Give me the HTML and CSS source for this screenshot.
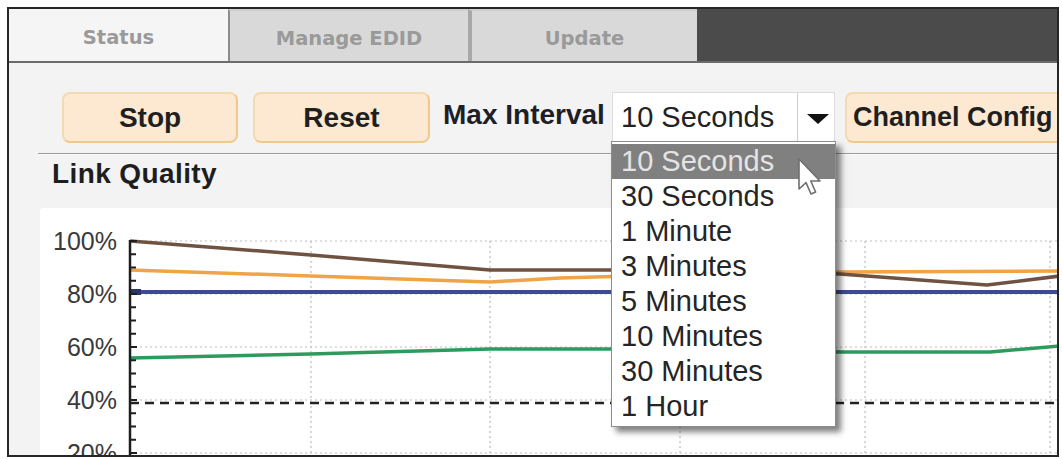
FILE: index.html
```html
<!DOCTYPE html>
<html>
<head>
<meta charset="utf-8">
<link rel="stylesheet" href="styles.css">
</head>
<body>
<div class="frame">
  <div class="tabs">
    <div class="tab active">Status</div>
    <div class="tab inactive">Manage EDID</div>
    <div class="tab inactive last">Update</div>
  </div>
  <div class="content">
    <div class="toolbar">
      <button class="btn btn-stop">Stop</button>
      <button class="btn btn-reset">Reset</button>
      <span class="label">Max Interval</span>
      <div class="select">
        <span class="select-value">10 Seconds</span>
        <span class="select-arrow"><svg width="22" height="10" viewBox="0 0 22 10"><polygon points="0,0 22,0 11,10" fill="#111"/></svg></span>
        <ul class="dropdown">
          <li class="selected">10 Seconds</li>
          <li>30 Seconds</li>
          <li>1 Minute</li>
          <li>3 Minutes</li>
          <li>5 Minutes</li>
          <li>10 Minutes</li>
          <li>30 Minutes</li>
          <li>1 Hour</li>
        </ul>
        <svg class="cursor" width="26" height="40" viewBox="0 0 13 20"><path d="M1 1 L1 16 L4.5 12.8 L7 18.5 L9.3 17.5 L6.9 12 L11.5 12 Z" fill="#fff" stroke="#6f6f6f" stroke-width="0.8" stroke-linejoin="round"/></svg>
      </div>
      <button class="btn btn-channel">Channel Config</button>
    </div>
    <div class="sep"></div>
    <div class="section-title">Link Quality</div>
    <div class="chart">
      <svg width="1017" height="250" viewBox="0 0 1017 250">
        <g stroke="#bdbdbd" stroke-width="1.2" stroke-dasharray="2 3" fill="none">
          <line x1="90" y1="33" x2="1017" y2="33"/>
          <line x1="90" y1="86" x2="1017" y2="86"/>
          <line x1="90" y1="139" x2="1017" y2="139"/>
          <line x1="90" y1="192" x2="1017" y2="192"/>
          <line x1="90" y1="245" x2="1017" y2="245"/>
          <line x1="271" y1="33" x2="271" y2="250"/>
          <line x1="450" y1="33" x2="450" y2="250"/>
          <line x1="640" y1="33" x2="640" y2="250"/>
          <line x1="825" y1="33" x2="825" y2="250"/>
          <line x1="1010" y1="33" x2="1010" y2="250"/>
        </g>
        <g class="ylabels" fill="#3a3a3a" text-anchor="end">
          <text x="77" y="42">100%</text>
          <text x="77" y="95">80%</text>
          <text x="77" y="148">60%</text>
          <text x="77" y="201">40%</text>
          <text x="77" y="254">20%</text>
        </g>
        <line x1="90" y1="195" x2="1017" y2="195" stroke="#222" stroke-width="2.5" stroke-dasharray="9 6"/>
        <polyline points="90,150 270,146 450,141 660,141 800,144 950,144 1020,138" fill="none" stroke="#2f9a5d" stroke-width="3.5" stroke-linejoin="round"/>
        <line x1="90" y1="84" x2="1017" y2="84" stroke="#3c4b94" stroke-width="4"/>
        <line x1="90" y1="84" x2="101" y2="84" stroke="#2b3670" stroke-width="6"/>
        <polyline points="90,62 271,68 450,74 520,70 660,66 800,64 1020,63" fill="none" stroke="#f0a347" stroke-width="3.5" stroke-linejoin="round"/>
        <polyline points="90,33 271,47 450,62 660,62 800,66 947,77 1020,68" fill="none" stroke="#6f5242" stroke-width="3.5" stroke-linejoin="round"/>
        <line x1="90" y1="32" x2="90" y2="250" stroke="#1e1e1e" stroke-width="2.5"/>
        <path d="M90 33h7M90 46.25h6M90 59.5h6M90 72.75h6M90 86h7M90 99.25h6M90 112.5h6M90 125.75h6M90 139h7M90 152.25h6M90 165.5h6M90 178.75h6M90 192h7M90 205.25h6M90 218.5h6M90 231.75h6M90 245h7" stroke="#1e1e1e" stroke-width="2"/>
      </svg>
    </div>
  </div>
</div>
</body>
</html>
```
FILE: styles.css
```css
* { box-sizing: border-box; }
body { margin: 0; background: #fff; font-family: "Liberation Sans", Arial, sans-serif; }

.frame {
  margin: 7px 0 0 7px;
  width: 1052px;
  height: 450px;
  border: 2px solid #262626;
  overflow: hidden;
  background: #f3f3f3;
}

.tabs {
  display: flex;
  height: 54px;
  background: #4b4b4b;
  border-bottom: 2px solid #6b6b6b;
}
.tab {
  height: 52px;
  display: flex;
  align-items: center;
  justify-content: center;
  padding-top: 5px;
  font-family: "DejaVu Sans", Verdana, sans-serif;
  font-weight: bold;
  font-size: 19.5px;
  color: #9a9a9a;
}
.tab.active { width: 219px; background: #f5f5f5; }
.tab.inactive {
  width: 240px;
  background: #d9d9d9;
  border-left: 2px solid #8c8c8c;
  border-top: 2px solid #cfcfcf;
}
.tab.last { width: 229px; border-left: 4px solid #a8a8a8; }

.content {
  padding: 29px 0 0 29px;
  background: #f3f3f3;
}

.toolbar {
  display: flex;
  align-items: center;
  height: 51px;
  padding-left: 24px;
}
.btn {
  flex: none;
  height: 51px;
  border: 2px solid #f4dab1;
  border-right-color: #efca8f;
  border-bottom-color: #efc98b;
  border-radius: 8px;
  background: #fde9d2;
  font-family: "Liberation Sans", Arial, sans-serif;
  font-weight: bold;
  font-size: 28px;
  color: #1f1f1f;
  padding: 0;
  white-space: nowrap;
}
.btn-stop { width: 176px; }
.btn-reset { width: 177px; margin-left: 15px; }
.btn-channel {
  width: 240px;
  margin-left: 10px;
  text-align: left;
  padding-left: 6px;
  font-size: 27px;
}

.label {
  flex: none;
  width: 169px;
  margin-left: 13px;
  font-weight: bold;
  font-size: 28px;
  color: #1e1e28;
  white-space: nowrap;
  align-self: flex-start;
  padding-top: 7px;
}

.select {
  flex: none;
  position: relative;
  display: flex;
  width: 223px;
  height: 51px;
  background: #fff;
  border: 1px solid #dcdcdc;
}
.select-value {
  width: 185px;
  border-right: 1px solid #cfcfcf;
  padding-left: 8px;
  font-size: 29px;
  line-height: 49px;
  color: #222;
  white-space: nowrap;
}
.select-arrow {
  flex: 1;
  display: flex;
  align-items: center;
  justify-content: center;
  padding: 2px 0 0 4px;
}

.dropdown {
  position: absolute;
  left: -2px;
  top: 48px;
  width: 225px;
  margin: 0;
  padding: 2px 0;
  list-style: none;
  background: #fff;
  border: 1px solid #8d8d8d;
  box-shadow: 5px 5px 6px rgba(0, 0, 0, 0.5);
  z-index: 5;
}
.dropdown li {
  height: 35px;
  line-height: 35px;
  padding-left: 9px;
  font-size: 29px;
  color: #252525;
  white-space: nowrap;
}
.dropdown li.selected { background: #808080; color: #e4e4e4; }

.cursor {
  position: absolute;
  left: 184px;
  top: 64px;
  z-index: 6;
}

.sep {
  margin-top: 10px;
  height: 2px;
  border-top: 1px solid #9a9a9a;
  border-bottom: 1px solid #fbfbfb;
}

.section-title {
  margin: 4px 0 0 14px;
  font-weight: bold;
  font-size: 28px;
  letter-spacing: 0.4px;
  line-height: 30px;
  color: #1e1e1e;
}

.chart {
  margin: 19px 0 0 2px;
  height: 250px;
  background: #fff;
  border-radius: 4px 0 0 0;
  overflow: hidden;
}
.chart svg { display: block; }
.ylabels { font-family: "Liberation Sans", Arial, sans-serif; font-size: 25px; }
```
